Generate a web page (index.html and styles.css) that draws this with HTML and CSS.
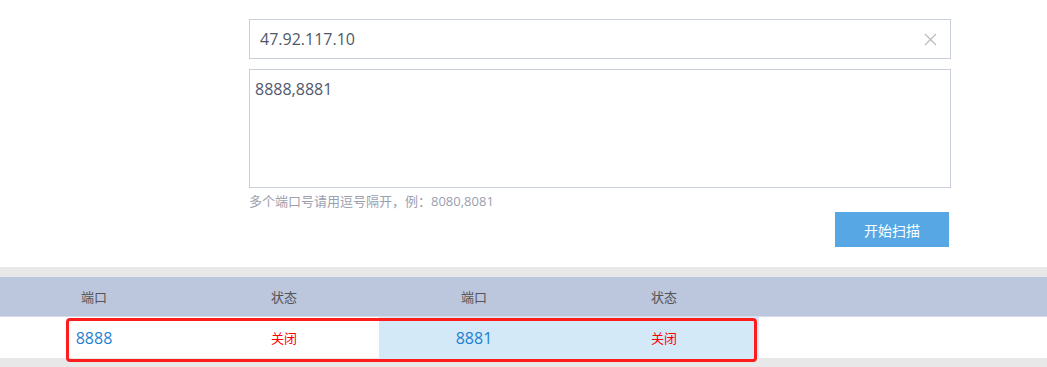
FILE: index.html
```html
<!DOCTYPE html>
<html lang="zh">
<head>
<meta charset="utf-8">
<link rel="stylesheet" href="styles.css">
</head>
<body>
<div class="page">
  <div class="form">
    <div class="input">
      <span class="input-text">47.92.117.10</span>
      <svg class="clear" width="13" height="13" viewBox="0 0 13 13"><path d="M1 1L12 12M12 1L1 12" stroke="#b8b8b8" stroke-width="1.1" fill="none"/></svg>
    </div>
    <div class="textarea">8888,8881</div>
    <div class="hint">多个端口号请用逗号隔开，例：8080,8081</div>
    <div class="actions"><button class="btn">开始扫描</button></div>
  </div>
  <div class="band"></div>
  <div class="table">
    <div class="thead">
      <div class="cell">端口</div>
      <div class="cell">状态</div>
      <div class="cell">端口</div>
      <div class="cell">状态</div>
    </div>
    <div class="trow">
      <div class="cell port">8888</div>
      <div class="cell status">关闭</div>
      <div class="cell port hl">8881</div>
      <div class="cell status hl">关闭</div>
    </div>
    <div class="mark"></div>
  </div>
  <div class="band"></div>
</div>
</body>
</html>
```
FILE: styles.css
```css
html, body {
  margin: 0;
  padding: 0;
  background: #fff;
  font-family: "Open Sans", "Noto Sans CJK SC", sans-serif;
}
.page {
  width: 1047px;
  height: 367px;
  overflow: hidden;
}
.form {
  margin-left: 249px;
  width: 702px;
  padding-top: 19px;
}
.input {
  box-sizing: border-box;
  height: 40px;
  border: 1px solid #c9cfdc;
  display: flex;
  align-items: center;
  justify-content: space-between;
  padding: 0 13px 0 10px;
}
.input-text {
  font-size: 16px;
  color: #4f586c;
  line-height: 20px;
}
.clear {
  display: block;
}
.textarea {
  box-sizing: border-box;
  margin-top: 10px;
  height: 119px;
  border: 1px solid #c9cfdc;
  padding: 8px 5px;
  font-size: 16px;
  line-height: 22px;
  color: #4f586c;
}
.hint {
  font-size: 13px;
  line-height: 20px;
  height: 20px;
  margin-top: 3px;
  color: #9aa0ae;
}
.actions {
  display: flex;
  justify-content: flex-end;
  padding-right: 2px;
  margin-top: 1px;
}
.btn {
  width: 114px;
  height: 35px;
  border: none;
  background: #56a7e3;
  color: #fff;
  font-family: "Noto Sans CJK SC", sans-serif;
  font-size: 14px;
  padding: 0;
}
.band {
  height: 10px;
  background: #e8e8e8;
  margin-top: 20px;
}
.table + .band {
  margin-top: 0;
}
.table {
  position: relative;
}
.thead, .trow {
  display: grid;
  grid-template-columns: repeat(4, 190px);
  margin-left: -1px;
}
.thead {
  height: 40px;
  background: #bcc6dd;
  border-bottom: 1px solid #d6dceb;
  box-sizing: border-box;
}
.thead .cell {
  font-family: "Noto Sans CJK SC", sans-serif;
  font-size: 13px;
  color: #555;
  line-height: 40px;
  text-align: center;
}
.trow {
  height: 41px;
  background: #fff;
}
.trow .cell {
  text-align: center;
  line-height: 41px;
}
.port {
  font-size: 16px;
  color: #1f7fd0;
  padding-top: 1px;
  box-sizing: border-box;
}
.status {
  font-family: "Noto Sans CJK SC", sans-serif;
  font-size: 13px;
  color: #ff0000;
}
.hl {
  background: #d3e9f8;
}
.mark {
  position: absolute;
  left: 66px;
  top: 41px;
  width: 691px;
  height: 44px;
  box-sizing: border-box;
  border: 3px solid #ff1c1c;
  border-radius: 4px;
}
```
